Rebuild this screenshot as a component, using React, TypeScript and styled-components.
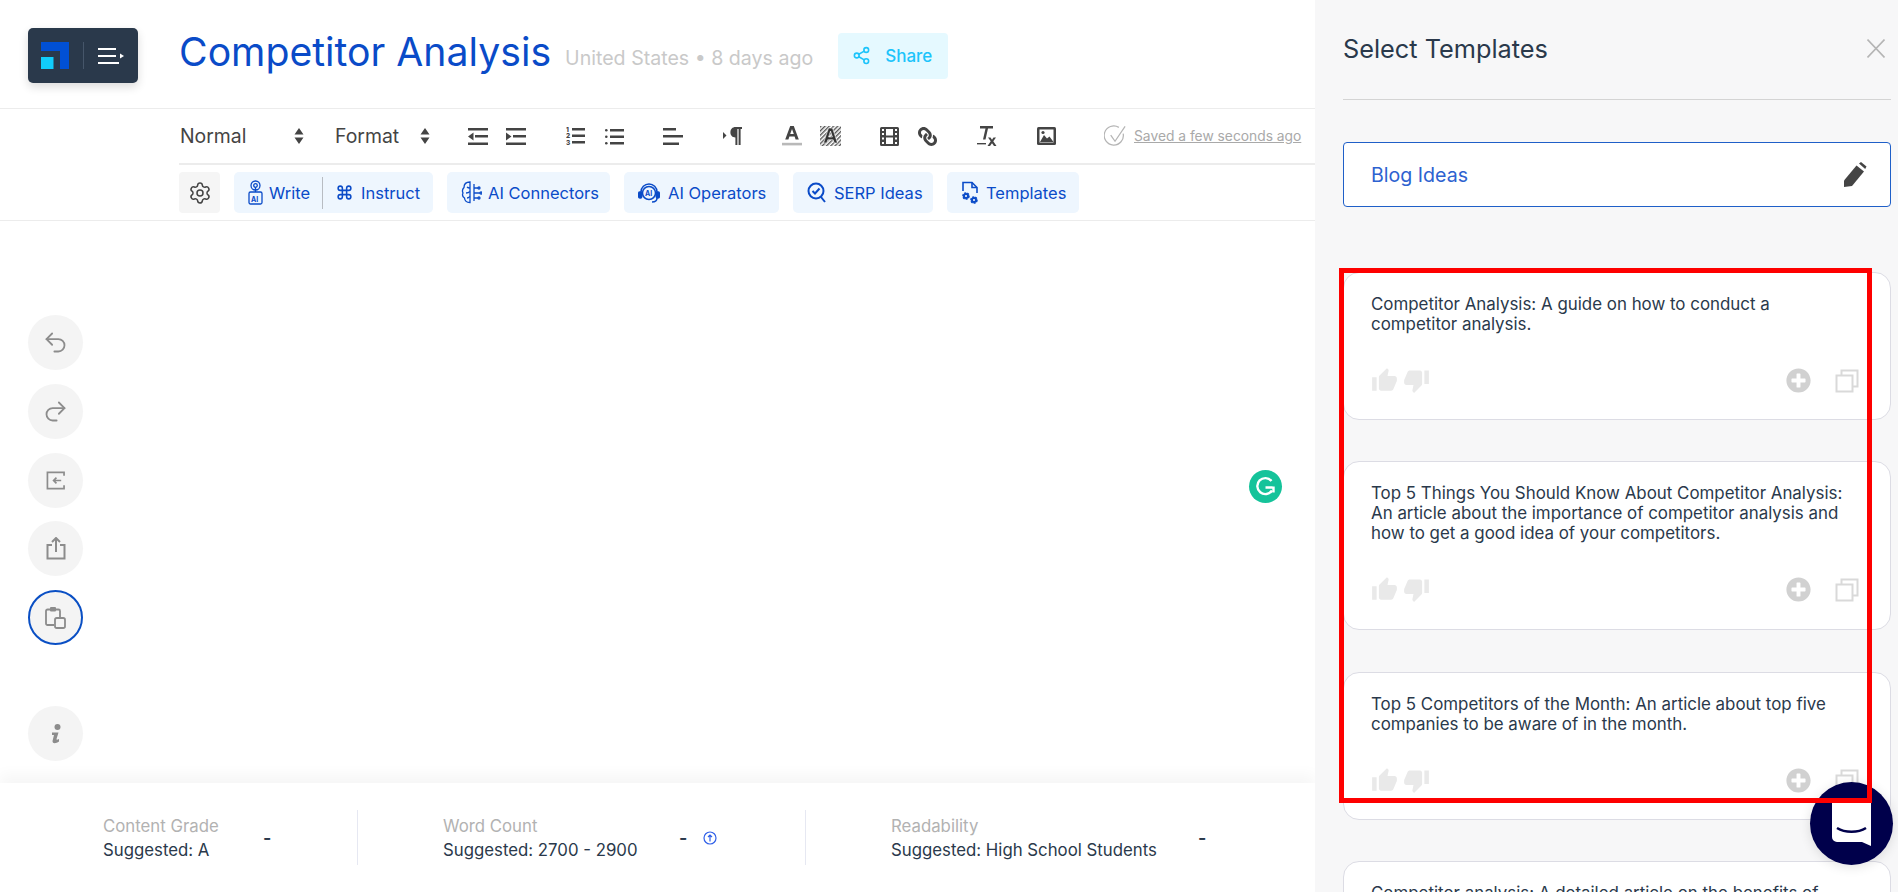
import React from 'react';
import styled, { createGlobalStyle } from 'styled-components';
import { Undo2, Redo2, Share2, Settings, Command } from 'lucide-react';
import { FaPlusCircle, FaLink } from 'react-icons/fa';
import { MdThumbUp, MdThumbDown } from 'react-icons/md';

const GlobalStyle = createGlobalStyle`
  html, body {
    margin: 0;
    padding: 0;
    height: 100%;
    overflow: hidden;
    background: #fff;
    font-family: Inter, "Liberation Sans", sans-serif;
  }
  * {
    box-sizing: border-box;
  }
`;

const Page = styled.div`
  position: relative;
  display: flex;
  width: 1898px;
  height: 892px;
  overflow: hidden;
`;

const Main = styled.main`
  display: flex;
  flex-direction: column;
  width: 1315px;
  height: 892px;
`;

const Header = styled.header`
  display: flex;
  align-items: center;
  height: 109px;
  padding: 3px 0 0 28px;
  border-bottom: 1px solid #ececec;
`;

const Logo = styled.div`
  display: flex;
  align-items: center;
  width: 110px;
  height: 55px;
  padding-left: 13px;
  border-radius: 5px;
  background: #2a394b;
  box-shadow: 0 4px 10px rgba(0, 0, 0, 0.14);
`;

const LogoSplit = styled.span`
  width: 1px;
  height: 27px;
  margin: 0 14px;
  background: #46566a;
`;

const Title = styled.h1`
  margin: -7px 0 0 41px;
  color: #0a4bc8;
  font-size: 39.2px;
  font-weight: 400;
  line-height: 48px;
  white-space: nowrap;
`;

const Meta = styled.span`
  margin: 5px 0 0 14px;
  color: #c9c9c9;
  font-size: 19.6px;
  white-space: nowrap;
`;

const ShareButton = styled.button`
  display: flex;
  align-items: center;
  gap: 14px;
  width: 110px;
  height: 46px;
  margin: 0 0 0 25px;
  padding: 0 0 0 14px;
  border: 0;
  border-radius: 4px;
  background: #e5f9ff;
  color: #1cc4fb;
  font-family: inherit;
  font-size: 17px;
  font-weight: 500;
`;

const ToolbarBlock = styled.div`
  height: 112px;
  padding-left: 179px;
  border-bottom: 1px solid #ececec;
`;

const FormatRow = styled.div`
  display: flex;
  align-items: center;
  height: 56px;
  padding-left: 1px;
  border-bottom: 2px solid #ececec;
  color: #444;
`;

const FormatSelect = styled.span<{ $width: number }>`
  display: flex;
  align-items: center;
  justify-content: space-between;
  width: ${({ $width }) => $width}px;
  font-size: 19.4px;
  color: #444;
`;

const ToolIcon = styled.span<{ $left: number; $flip?: boolean }>`
  display: flex;
  flex: none;
  align-items: center;
  margin-left: ${({ $left }) => $left}px;
  color: #444;
  transform: ${({ $flip }) => ($flip ? 'scaleX(-1)' : 'none')};
`;

const Saved = styled.span`
  display: flex;
  align-items: center;
  gap: 7px;
  margin-left: 48px;
  color: #a9a9a9;
  font-size: 13.8px;
  text-decoration: underline;
  white-space: nowrap;
`;

const AiRow = styled.div`
  display: flex;
  gap: 14px;
  align-items: center;
  height: 55px;
`;

const GearButton = styled.span`
  display: flex;
  align-items: center;
  justify-content: center;
  width: 41px;
  height: 41px;
  border-radius: 4px;
  background: #f5f5f5;
  color: #444;
`;

const AiGroup = styled.div<{ $width: number }>`
  display: flex;
  flex: none;
  align-items: center;
  width: ${({ $width }) => $width}px;
  height: 41px;
  padding-left: 14px;
  border-radius: 5px;
  background: #eef6fe;
  color: #0a4bc8;
  font-size: 16.5px;
  white-space: nowrap;
`;

const AiItem = styled.span<{ $gap: number }>`
  display: flex;
  align-items: center;
  gap: ${({ $gap }) => $gap}px;
`;

const AiSplit = styled.span`
  width: 1px;
  height: 32px;
  margin: 0 13px 0 12px;
  background: #b8bcc2;
`;

const Editor = styled.div`
  position: relative;
  display: flex;
  flex: 1;
  flex-direction: column;
  padding: 94px 0 0 28px;
`;

const RoundButton = styled.span<{ $active?: boolean; $gap?: number }>`
  display: flex;
  flex: none;
  align-items: center;
  justify-content: center;
  width: 55px;
  height: 55px;
  margin-bottom: ${({ $gap }) => $gap ?? 13.75}px;
  border: ${({ $active }) => ($active ? '2px solid #0a4fc4' : '0')};
  border-radius: 50%;
  background: #f4f4f4;
  color: #8c8c8c;
`;

const GrammarlyBadge = styled.span`
  position: absolute;
  top: 249px;
  left: 1249px;
  display: flex;
  align-items: center;
  justify-content: center;
  width: 33px;
  height: 33px;
  border-radius: 50%;
  background: #15c39a;
`;

const StatsBar = styled.footer`
  display: flex;
  align-items: center;
  flex: none;
  height: 109px;
  padding-left: 103px;
  box-shadow: 0 -8px 14px rgba(0, 0, 0, 0.04);
  background: #fff;
`;

const Stat = styled.div<{ $width: number }>`
  display: flex;
  align-items: center;
  width: ${({ $width }) => $width}px;
  height: 55px;
`;

const StatDivider = styled.span<{ $right: number }>`
  width: 1px;
  height: 55px;
  margin-right: ${({ $right }) => $right}px;
  background: #e6e8f2;
`;

const StatText = styled.div<{ $width: number }>`
  display: flex;
  flex-direction: column;
  gap: 6px;
  width: ${({ $width }) => $width}px;
`;

const StatLabel = styled.span`
  color: #b2b2b2;
  font-size: 16.8px;
  line-height: 18px;
`;

const StatValue = styled.span`
  color: #2a394b;
  font-size: 16.8px;
  line-height: 18px;
  white-space: nowrap;
`;

const StatDash = styled.span`
  color: #2a394b;
  font-size: 18px;
  font-weight: 600;
`;

const StatUp = styled.span`
  display: flex;
  margin-left: 16px;
  color: #2f5fe8;
`;

const Panel = styled.aside`
  flex: 1;
  height: 892px;
  overflow: hidden;
  padding: 0 7px 0 28px;
  background: #f7f7f8;
`;

const PanelHead = styled.div`
  display: flex;
  align-items: center;
  justify-content: space-between;
  height: 100px;
  padding: 0 6px 2px 0;
  border-bottom: 1px solid #d4d4d4;
`;

const PanelTitle = styled.h2`
  margin: 0;
  color: #2a394b;
  font-size: 25.3px;
  font-weight: 400;
`;

const PanelClose = styled.span`
  display: flex;
  color: #b5b5b5;
`;

const TopicBox = styled.div`
  display: flex;
  align-items: center;
  justify-content: space-between;
  height: 65px;
  margin: 42px 0 65px;
  padding: 0 23px 0 27px;
  border: 1px solid #1f5fc8;
  border-radius: 4px;
  background: #fff;
  color: #2e62d0;
  font-size: 19.6px;
`;

const TopicEdit = styled.span`
  display: flex;
  color: #444;
`;

const Card = styled.article<{ $height: number; $after: number }>`
  height: ${({ $height }) => $height}px;
  margin-bottom: ${({ $after }) => $after}px;
  padding: 21px 31px 0 27px;
  border: 1px solid #dcdce4;
  border-radius: 16px;
  background: #fff;
`;

const CardText = styled.p<{ $lines: number }>`
  max-width: 482px;
  height: ${({ $lines }) => $lines * 20}px;
  margin: 0;
  color: #2a394b;
  font-size: 16.9px;
  line-height: 20px;
`;

const CardActions = styled.div`
  display: flex;
  align-items: center;
  justify-content: space-between;
  margin-top: 33px;
`;

const CardGroup = styled.span<{ $gap: number }>`
  display: flex;
  align-items: center;
  gap: ${({ $gap }) => $gap}px;
`;

const VoteIcon = styled.span`
  display: flex;
  color: #e9e9e9;
`;

const AddIcon = styled.span`
  display: flex;
  color: #d1d1d1;
`;

const CopyIcon = styled.span`
  display: flex;
  color: #d9d9d9;
`;

const ChatBubble = styled.span`
  position: absolute;
  top: 782px;
  left: 1810px;
  display: flex;
  align-items: center;
  justify-content: center;
  width: 83px;
  height: 83px;
  border-radius: 50%;
  background: #00004b;
  box-shadow: 0 2px 12px rgba(0, 0, 0, 0.12);
`;

const Annotation = styled.div`
  position: absolute;
  top: 268px;
  left: 1339px;
  width: 533px;
  height: 535px;
  border: 5px solid #fe0000;
  pointer-events: none;
`;

const LogoMark = () => (
  <svg width="28" height="27" viewBox="0 0 28 27">
    <path d="M0 0h28v27h-9V9H0z" fill="#0150d4" />
    <path d="M0 15h12.500v12H0z" fill="#11cdfb" />
  </svg>
);

const LogoMenu = () => (
  <svg width="26" height="16" viewBox="0 0 26 16" fill="none" stroke="#fff" strokeWidth="2">
    <path d="M0 1h18M0 8h18M0 15h21" />
    <path d="M22 5.500l4 2.500-4 2.500z" fill="#fff" stroke="none" />
  </svg>
);

const Glyph = ({ w, h, children }: { w: number; h: number; children: React.ReactNode }) => (
  <svg width={w} height={h} viewBox={`0 0 ${w} ${h}`} fill="currentColor">
    {children}
  </svg>
);

const UpDown = () => (
  <Glyph w={10} h={16}>
    <path d="M5 0l4.500 6.500h-9zM5 16L.5 9.500h9z" />
  </Glyph>
);

const IndentLess = () => (
  <Glyph w={20} h={17}>
    <path d="M0 0h20v2.600H0zM7 7h13v2.600H7zM0 14.400h20V17H0zM5.500 4.500v8L0 8.500z" />
  </Glyph>
);

const IndentMore = () => (
  <Glyph w={20} h={17}>
    <path d="M0 0h20v2.600H0zM7 7h13v2.600H7zM0 14.400h20V17H0zM0 4.500v8L5.500 8.500z" />
  </Glyph>
);

const ListOrdered = () => (
  <svg width="19" height="18" viewBox="0 0 19 18">
    <path d="M6 1h13v2.400H6zM6 7.500h13v2.400H6zM6 14h13v2.400H6z" fill="currentColor" />
    <text x="0" y="5" fontSize="6.500" fontWeight="800" fill="currentColor" fontFamily="Inter">1</text>
    <text x="0" y="11" fontSize="6.500" fontWeight="800" fill="currentColor" fontFamily="Inter">2</text>
    <text x="0" y="17.500" fontSize="6.500" fontWeight="800" fill="currentColor" fontFamily="Inter">3</text>
  </svg>
);

const ListPlain = () => (
  <Glyph w={19} h={17}>
    <path d="M5 1h14v2.400H5zM5 7.500h14v2.400H5zM5 14h14v2.400H5z" />
    <circle cx="1.300" cy="2.200" r="1.300" />
    <circle cx="1.300" cy="8.700" r="1.300" />
    <circle cx="1.300" cy="15.200" r="1.300" />
  </Glyph>
);

const AlignLeft = () => (
  <Glyph w={20} h={17}>
    <path d="M0 0h13v2.600H0zM0 7h20v2.600H0zM0 14.400h16V17H0z" />
  </Glyph>
);

const Pilcrow = () => (
  <svg width="19" height="18" viewBox="0 0 19 18" fill="currentColor">
    <path d="M0 5l3.500 3.500L0 12z" />
    <path d="M12.500 0H19v2h-1.400v16h-2V2h-1.200v16h-2v-7.500c-3 0-5-2-5-5.200S9.500 0 12.500 0z" />
  </svg>
);

const TextColor = () => (
  <svg width="20" height="20" viewBox="0 0 20 20">
    <path d="M8.200 0h3.600l5 13.500h-3.200l-1-3H7.400l-1 3H3.200zM8.200 8h3.600L10 3z" fill="#444" fillRule="evenodd" />
    <rect x="0" y="16.800" width="20" height="2.600" fill="#b9b9b9" />
  </svg>
);

const TextHighlight = () => (
  <svg width="21" height="20" viewBox="0 0 21 20">
    <defs>
      <pattern id="hatch" width="3" height="3" patternUnits="userSpaceOnUse" patternTransform="rotate(45)">
        <rect width="1.400" height="3" fill="#555" />
      </pattern>
    </defs>
    <rect width="21" height="20" fill="url(#hatch)" />
    <path d="M8.500 2h4l5 15h-3.300l-1-3.200H7.800l-1 3.200H3.500zM8.600 11h3.800L10.500 5z" fill="#333" fillRule="evenodd" stroke="#fff" strokeWidth=".6" />
  </svg>
);

const Film = () => (
  <Glyph w={19} h={19}>
    <path
      fillRule="evenodd"
      d="M1.500 0h16A1.500 1.500 0 0 1 19 1.500v16a1.500 1.500 0 0 1-1.500 1.500h-16A1.500 1.500 0 0 1 0 17.500v-16A1.500 1.500 0 0 1 1.500 0zM2 2v2h2V2zm0 4v2h2V6zm0 4.500v2h2v-2zm0 4.500v2h2v-2zM15 2v2h2V2zm0 4v2h2V6zm0 4.500v2h2v-2zm0 4.500v2h2v-2zM6 2v6.500h7V2zm0 8.500V17h7v-6.500z"
    />
  </Glyph>
);

const ClearFormat = () => (
  <svg width="20" height="20" viewBox="0 0 20 20" fill="currentColor">
    <path d="M3 0h13v2.400h-5L8.500 13.500H6L8.500 2.400H3z" />
    <path d="M0 17h9v1.400H0z" />
    <path d="M11 11.500h2.500l1.500 2.200 1.500-2.200H19l-2.700 3.700L19.500 20H17l-2-2.800L13 20h-2.500l3.200-4.800z" />
  </svg>
);

const ImageIcon = () => (
  <svg width="19" height="18" viewBox="0 0 19 18">
    <rect width="19" height="18" rx="1.500" fill="#444" />
    <rect x="2.500" y="2.500" width="14" height="13" fill="#fff" />
    <path d="M3 15l4-7 3 3.500 2.500-2 4 5.500z" fill="#444" />
    <circle cx="6" cy="5.500" r="1.600" fill="#444" />
  </svg>
);

const SavedCheck = () => (
  <svg width="23" height="24" viewBox="0 0 24 24" fill="none" stroke="#b5b5b5" strokeWidth="1.300">
    <path d="M20 9.500A10 10 0 1 1 15.500 3" />
    <path d="M7 11l4.500 6.500L22 2" />
  </svg>
);

const WriteIcon = () => (
  <svg width="15" height="25" viewBox="0 0 15 25" fill="none" stroke="currentColor" strokeWidth="1.300">
    <circle cx="7.500" cy="5.500" r="4.500" />
    <circle cx="7.500" cy="5.500" r="1.800" />
    <path d="M7.500 7v5" />
    <rect x="1" y="12" width="13" height="12" rx="1.500" />
    <text x="3" y="21.500" fontSize="7" fontWeight="700" fill="currentColor" stroke="none" fontFamily="Inter">AI</text>
  </svg>
);

const ConnectorIcon = () => (
  <svg width="21" height="25" viewBox="0 0 21 25" fill="none" stroke="currentColor" strokeWidth="1.300">
    <path d="M9 2C4.500 2 3 5 3 7.500 1.500 9 1 11 2 13c-1 2 0 4 1.500 5 .2 2.500 2 4.500 5.500 4.500z" />
    <path d="M6 7c1 1 2 1 3 1M5 13c1.500 0 3-.5 4-1.500M6 18c1 0 2-.5 3-1.500" />
    <path d="M13 4v17M13 8h4M13 13h6M13 18h4" />
    <circle cx="18" cy="8" r="1" />
    <circle cx="20" cy="13" r="1" />
    <circle cx="18" cy="18" r="1" />
  </svg>
);

const OperatorIcon = () => (
  <svg width="22" height="22" viewBox="0 0 22 22" fill="none" stroke="currentColor" strokeWidth="1.500">
    <path d="M3 13V10a8 8 0 0 1 16 0v3" />
    <circle cx="11" cy="11" r="6.500" />
    <rect x="0.700" y="10" width="3" height="6" rx="1.200" fill="currentColor" />
    <rect x="18.300" y="10" width="3" height="6" rx="1.200" fill="currentColor" />
    <path d="M19 16c0 2.500-2 4-5 4" />
    <text x="7" y="14" fontSize="7" fontWeight="700" fill="currentColor" stroke="none" fontFamily="Inter">AI</text>
  </svg>
);

const SerpIcon = () => (
  <svg width="19" height="21" viewBox="0 0 19 21" fill="none" stroke="currentColor" strokeWidth="2">
    <circle cx="9" cy="9" r="7.500" />
    <path d="M5.500 9l2.500 2.500 4.500-5M14 15l4 5" />
  </svg>
);

const TemplateIcon = () => (
  <svg width="20" height="23" viewBox="0 0 20 23" fill="none" stroke="currentColor" strokeWidth="1.600">
    <path d="M2 10V1.500h9l5 5V12" />
    <path d="M11 1.500v5h5" />
    <circle cx="5" cy="15" r="3" fill="currentColor" strokeDasharray="2 1" />
    <circle cx="13" cy="19" r="3" fill="currentColor" strokeDasharray="2 1" />
    <circle cx="5" cy="15" r="1" fill="#fff" stroke="none" />
    <circle cx="13" cy="19" r="1" fill="#fff" stroke="none" />
  </svg>
);

const ExitIcon = () => (
  <svg width="19" height="19" viewBox="0 0 20 20" fill="none" stroke="currentColor" strokeWidth="1.800">
    <path d="M19 5V1.500H1.500v17H19V15" />
    <path d="M16 10H8M11 7l-3 3 3 3" />
  </svg>
);

const UploadIcon = () => (
  <svg width="20" height="23" viewBox="0 0 20 23" fill="none" stroke="currentColor" strokeWidth="2">
    <path d="M6 8H1.500v13.500h17V8H14" />
    <path d="M10 15V2M6 5l4-4 4 4" />
  </svg>
);

const ClipboardIcon = () => (
  <svg width="21" height="22" viewBox="0 0 21 22" fill="none" stroke="currentColor" strokeWidth="1.800">
    <path d="M9 18H2.500A1.500 1.500 0 0 1 1 16.500V4a1.500 1.500 0 0 1 1.500-1.500h11A1.500 1.500 0 0 1 15 4v6" />
    <rect x="5" y="0" width="6" height="4.500" rx="1" fill="currentColor" stroke="none" />
    <rect x="10" y="11" width="10" height="10" rx="1.800" />
  </svg>
);

const InfoIcon = () => (
  <svg width="10" height="20" viewBox="0 0 10 20" fill="currentColor">
    <circle cx="6.500" cy="3" r="3" />
    <path d="M1 8.500h6.500L5.500 15c-.2.800.6 1 2.500 0v2.500c-3 2-6.500 2.500-6.500-.5L3 11H1z" />
  </svg>
);

const StackIcon = () => (
  <svg width="24" height="24" viewBox="0 0 24 24" fill="none" stroke="currentColor" strokeWidth="2">
    <rect x="1.500" y="6.500" width="16" height="16" />
    <path d="M6.500 6.500V1.500h16v16H17.500" />
  </svg>
);

const CloseIcon = () => (
  <svg width="18" height="19" viewBox="0 0 18 19" fill="none" stroke="currentColor" strokeWidth="1.600">
    <path d="M.5.500l17 18M17.500.500l-17 18" />
  </svg>
);

const PencilIcon = () => (
  <svg width="23" height="25" viewBox="0 0 23 25" fill="currentColor">
    <path d="M0 25V18.500L12.500 3.500l7.500 6L8 24z" />
    <path d="M15 1.500L17 0l5.500 4.500-1.300 2.500z" />
  </svg>
);

const ChatIcon = () => (
  <svg width="39" height="44" viewBox="0 0 39 44">
    <path d="M0 0h39v44l-9-4H5a5 5 0 0 1-5-5z" fill="#fff" />
    <path d="M5 26c8 5 21 5 29 0" fill="none" stroke="#00004b" strokeWidth="2.500" />
  </svg>
);

const GrammarlyIcon = () => (
  <svg width="21" height="21" viewBox="0 0 21 21" fill="none" stroke="#fff" strokeWidth="2.400">
    <path d="M16.500 5A8 8 0 1 0 17 14.500" />
    <path d="M10.500 11.500h7M18.500 10.500v6" />
  </svg>
);

const cards = [
  { text: 'Competitor Analysis: A guide on how to conduct a competitor analysis.', lines: 2, height: 148, after: 41 },
  {
    text: 'Top 5 Things You Should Know About Competitor Analysis: An article about the importance of competitor analysis and how to get a good idea of your competitors.',
    lines: 3,
    height: 169,
    after: 42,
  },
  { text: 'Top 5 Competitors of the Month: An article about top five companies to be aware of in the month.', lines: 2, height: 148, after: 41 },
  { text: 'Competitor analysis: A detailed article on the benefits of conducting a competitor analysis.', lines: 2, height: 148, after: 41 },
];

const App = () => (
  <Page>
    <GlobalStyle />
    <Main>
      <Header>
        <Logo>
          <LogoMark />
          <LogoSplit />
          <LogoMenu />
        </Logo>
        <Title>Competitor Analysis</Title>
        <Meta>United States • 8 days ago</Meta>
        <ShareButton>
          <Share2 size={19} />
          Share
        </ShareButton>
      </Header>
      <ToolbarBlock>
        <FormatRow>
          <FormatSelect $width={124}>
            Normal
            <UpDown />
          </FormatSelect>
          <ToolIcon $left={31}>
            <FormatSelect $width={95}>
              Format
              <UpDown />
            </FormatSelect>
          </ToolIcon>
          <ToolIcon $left={38}><IndentLess /></ToolIcon>
          <ToolIcon $left={18}><IndentMore /></ToolIcon>
          <ToolIcon $left={40}><ListOrdered /></ToolIcon>
          <ToolIcon $left={20}><ListPlain /></ToolIcon>
          <ToolIcon $left={39}><AlignLeft /></ToolIcon>
          <ToolIcon $left={40}><Pilcrow /></ToolIcon>
          <ToolIcon $left={40}><TextColor /></ToolIcon>
          <ToolIcon $left={18}><TextHighlight /></ToolIcon>
          <ToolIcon $left={39}><Film /></ToolIcon>
          <ToolIcon $left={19} $flip><FaLink size={19} /></ToolIcon>
          <ToolIcon $left={40}><ClearFormat /></ToolIcon>
          <ToolIcon $left={40}><ImageIcon /></ToolIcon>
          <Saved>
            <SavedCheck />
            Saved a few seconds ago
          </Saved>
        </FormatRow>
        <AiRow>
          <GearButton><Settings size={24} strokeWidth={1.5} /></GearButton>
          <AiGroup $width={199}>
            <AiItem $gap={6}><WriteIcon />Write</AiItem>
            <AiSplit />
            <AiItem $gap={8}><Command size={17} strokeWidth={2.2} />Instruct</AiItem>
          </AiGroup>
          <AiGroup $width={163}>
            <AiItem $gap={6}><ConnectorIcon />AI Connectors</AiItem>
          </AiGroup>
          <AiGroup $width={155}>
            <AiItem $gap={8}><OperatorIcon />AI Operators</AiItem>
          </AiGroup>
          <AiGroup $width={140}>
            <AiItem $gap={8}><SerpIcon />SERP Ideas</AiItem>
          </AiGroup>
          <AiGroup $width={132}>
            <AiItem $gap={5}><TemplateIcon />Templates</AiItem>
          </AiGroup>
        </AiRow>
      </ToolbarBlock>
      <Editor>
        <RoundButton><Undo2 size={27} strokeWidth={1.6} /></RoundButton>
        <RoundButton><Redo2 size={27} strokeWidth={1.6} /></RoundButton>
        <RoundButton><ExitIcon /></RoundButton>
        <RoundButton><UploadIcon /></RoundButton>
        <RoundButton $active $gap={61}><ClipboardIcon /></RoundButton>
        <RoundButton><InfoIcon /></RoundButton>
        <GrammarlyBadge><GrammarlyIcon /></GrammarlyBadge>
      </Editor>
      <StatsBar>
        <Stat $width={254}>
          <StatText $width={160}>
            <StatLabel>Content Grade</StatLabel>
            <StatValue>Suggested: A</StatValue>
          </StatText>
          <StatDash>-</StatDash>
        </Stat>
        <StatDivider $right={85} />
        <Stat $width={362}>
          <StatText $width={236}>
            <StatLabel>Word Count</StatLabel>
            <StatValue>Suggested: 2700 - 2900</StatValue>
          </StatText>
          <StatDash>-</StatDash>
          <StatUp>
            <svg width="14" height="14" viewBox="0 0 14 14" fill="none" stroke="currentColor" strokeWidth="1.200">
              <circle cx="7" cy="7" r="6" />
              <path d="M7 10.500V4M5 6l2-2 2 2" />
            </svg>
          </StatUp>
        </Stat>
        <StatDivider $right={85} />
        <Stat $width={330}>
          <StatText $width={307}>
            <StatLabel>Readability</StatLabel>
            <StatValue>Suggested: High School Students</StatValue>
          </StatText>
          <StatDash>-</StatDash>
        </Stat>
      </StatsBar>
    </Main>
    <Panel>
      <PanelHead>
        <PanelTitle>Select Templates</PanelTitle>
        <PanelClose><CloseIcon /></PanelClose>
      </PanelHead>
      <TopicBox>
        Blog Ideas
        <TopicEdit><PencilIcon /></TopicEdit>
      </TopicBox>
      {cards.map((card) => (
        <Card key={card.text} $height={card.height} $after={card.after}>
          <CardText $lines={card.lines}>{card.text}</CardText>
          <CardActions>
            <CardGroup $gap={5}>
              <VoteIcon><MdThumbUp size={27} /></VoteIcon>
              <VoteIcon><MdThumbDown size={27} /></VoteIcon>
            </CardGroup>
            <CardGroup $gap={24}>
              <AddIcon><FaPlusCircle size={25} /></AddIcon>
              <CopyIcon><StackIcon /></CopyIcon>
            </CardGroup>
          </CardActions>
        </Card>
      ))}
    </Panel>
    <ChatBubble><ChatIcon /></ChatBubble>
    <Annotation />
  </Page>
);

export default App;
